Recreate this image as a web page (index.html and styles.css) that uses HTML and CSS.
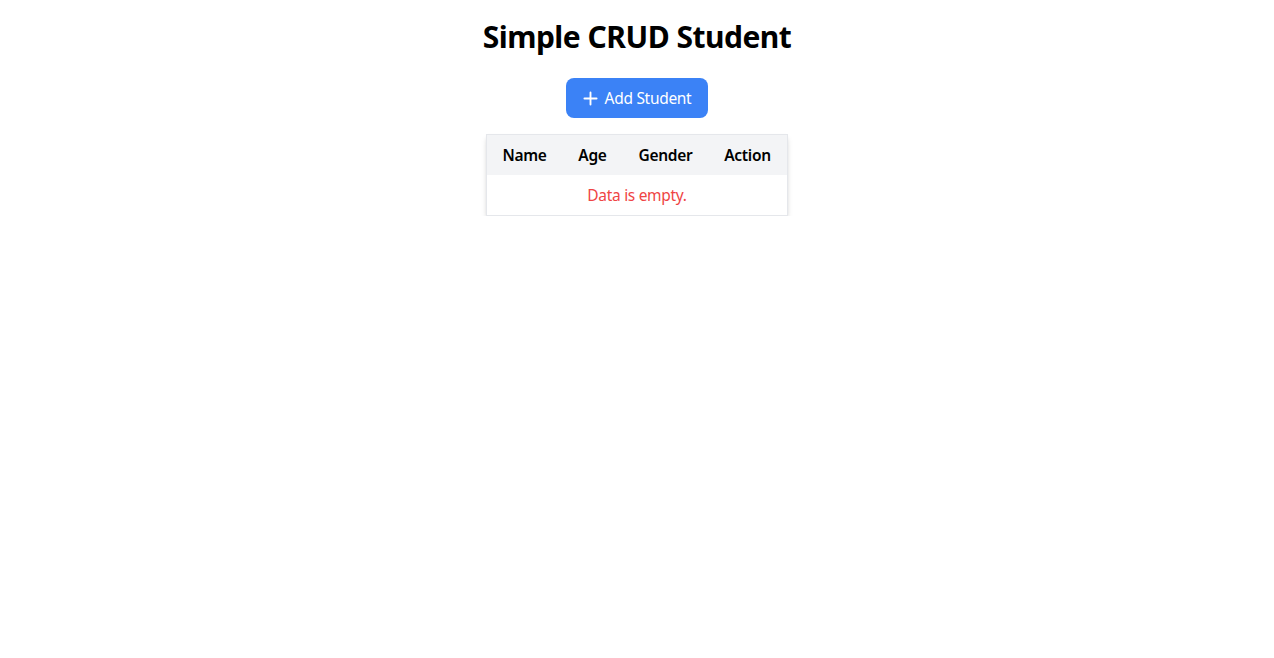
FILE: index.html
```html
<!DOCTYPE html>
<html lang="en">
<head>
<meta charset="utf-8">
<title>Simple CRUD Student</title>
<link rel="stylesheet" href="styles.css">
</head>
<body>
<main class="container">
  <h1 class="title">Simple CRUD Student</h1>
  <button class="btn-add" type="button">
    <svg class="icon" viewBox="0 0 16 16" width="15" height="15" aria-hidden="true"><path d="M8 1.5v13M1.5 8h13" stroke="currentColor" stroke-width="2" stroke-linecap="round" fill="none"/></svg>
    <span class="btn-label">Add Student</span>
  </button>
  <div class="table-wrap">
    <table class="table">
      <thead>
        <tr>
          <th class="c-name">Name</th>
          <th class="c-age">Age</th>
          <th class="c-gender">Gender</th>
          <th class="c-action">Action</th>
        </tr>
      </thead>
      <tbody>
        <tr><td colspan="4" class="empty">Data is empty.</td></tr>
      </tbody>
    </table>
  </div>
</main>
</body>
</html>
```
FILE: styles.css
```css
* { box-sizing: border-box; }
html, body { margin: 0; padding: 0; background: #fff; }
body {
  font-family: "Noto Sans", "Open Sans", sans-serif;
  color: #000;
}
.container {
  display: flex;
  flex-direction: column;
  align-items: center;
  padding-top: 20px;
}
.title {
  margin: 0;
  font-size: 30px;
  line-height: 34px;
  font-weight: 700;
  letter-spacing: -0.5px;
}
.btn-add {
  margin-top: 24px;
  display: flex;
  align-items: center;
  gap: 7px;
  height: 40px;
  width: 142px;
  justify-content: center;
  background: #3b82f6;
  color: #fff;
  border: none;
  border-radius: 8px;
  font-family: inherit;
  font-size: 15.5px;
  padding: 0;
  white-space: nowrap;
}
.btn-label { letter-spacing: -0.3px; }
.icon { display: block; }
.table-wrap {
  margin-top: 16px;
  border: 1px solid #e5e7eb;
  box-shadow: 0 4px 6px -1px rgba(0,0,0,0.15), 0 2px 4px -2px rgba(0,0,0,0.15);
}
.table {
  border-collapse: collapse;
  table-layout: fixed;
  width: 300px;
}
.table th {
  background: #f3f4f6;
  font-size: 15.5px;
  font-weight: 600;
  height: 40px;
  padding: 0;
  text-align: center;
  letter-spacing: -0.3px;
}
.c-name { width: 75px; }
.c-age { width: 61px; }
.c-gender { width: 85px; }
.c-action { width: 79px; }
.empty {
  height: 40px;
  text-align: center;
  color: #ef4444;
  font-size: 15.5px;
  letter-spacing: -0.3px;
  padding: 0;
}
```
